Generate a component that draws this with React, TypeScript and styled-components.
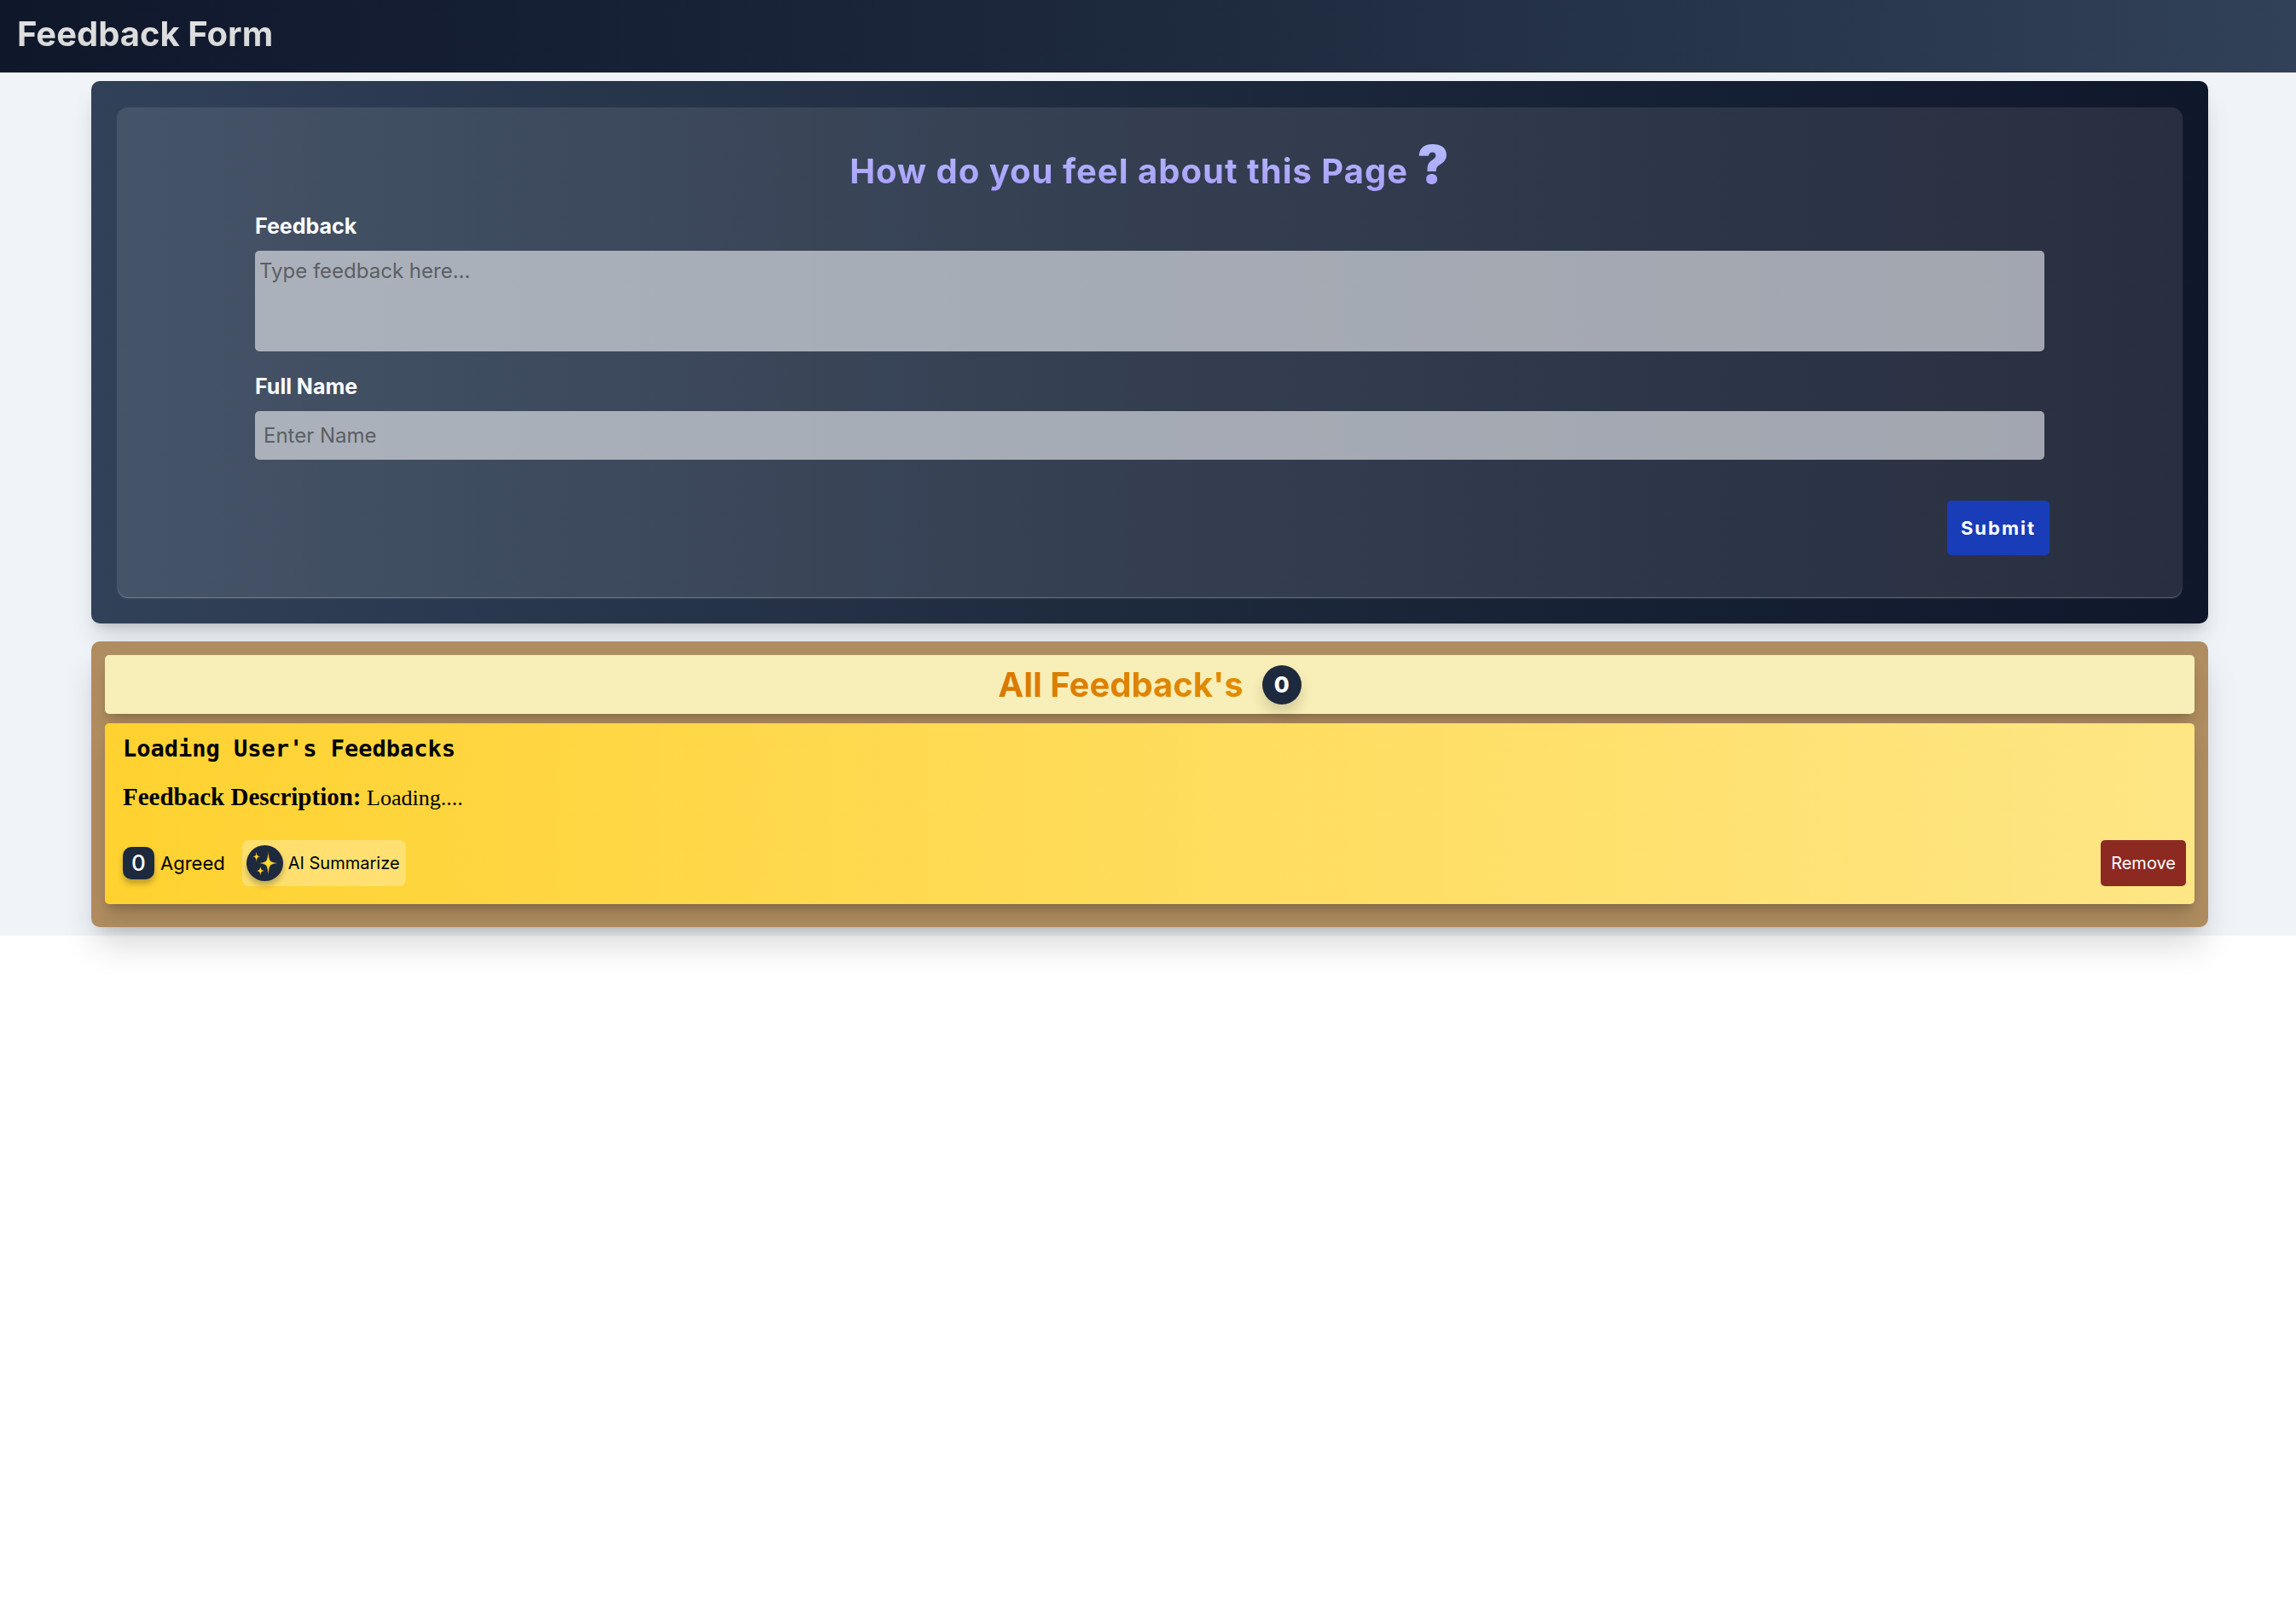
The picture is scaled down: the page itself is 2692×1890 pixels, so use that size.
import React, { useState } from "react";
import styled, { createGlobalStyle } from "styled-components";

const GlobalStyle = createGlobalStyle`
  *, *::before, *::after { box-sizing: border-box; }
  body {
    margin: 0;
    min-height: 100vh;
    background: #fff;
    color: #000;
    font-family: Inter, "Liberation Sans", sans-serif;
    font-size: 24px;
    line-height: 36px;
  }
  h1, h2, h3, p { margin: 0; }
  button, input, textarea { font-family: inherit; border: 0; }
  button { cursor: pointer; }
`;

const Page = styled.div`
  background: #f0f4f9;
`;

const TopBar = styled.header`
  display: flex;
  align-items: flex-start;
  height: 85px;
  padding: 10px 20px;
  background: linear-gradient(to right, #0f172b, #1d293d, #314158);
`;

const Brand = styled.h1`
  font-size: 40px;
  line-height: 60px;
  font-weight: 700;
  background: linear-gradient(to bottom, #e5e5e5, #d4d4d4);
  background-clip: text;
  color: transparent;
`;

const Main = styled.main`
  display: flex;
  flex-direction: column;
  gap: 21px;
  padding: 10px 103px 10px 107px;
`;

const FormPanel = styled.section`
  padding: 31px;
  border-radius: 10px;
  background: linear-gradient(to right, #314158, #1d293d, #0f172b);
  box-shadow: 0 20px 30px -5px rgba(0, 0, 0, 0.14), 0 8px 12px -6px rgba(0, 0, 0, 0.14);
`;

const FormCard = styled.form`
  display: flex;
  flex-direction: column;
  padding: 27px 161px 49px;
  border-radius: 12px;
  background: rgba(255, 255, 255, 0.1);
  box-shadow: 0 1px 2px rgba(255, 255, 255, 0.4);
`;

const Question = styled.h2`
  align-self: center;
  margin-bottom: 4px;
  font-size: 40px;
  line-height: 80px;
  font-weight: 700;
  letter-spacing: 1px;
  background: linear-gradient(to bottom, #b8c4ff, #a694ff);
  background-clip: text;
  color: transparent;
`;

const QuestionMark = styled.span`
  font-size: 62px;
  font-weight: 900;
`;

const FieldLabel = styled.label`
  margin-bottom: 9px;
  font-size: 25px;
  line-height: 40px;
  font-weight: 700;
  color: #fff;
`;

const fieldLook = `
  width: 100%;
  border-radius: 5px;
  background: rgba(225, 228, 232, 0.66);
  color: #1f2937;
  font-size: 24px;
  line-height: 36px;
  outline: 0;
  &::placeholder { color: #5b5f64; opacity: 1; }
`;

const MessageBox = styled.textarea`
  ${fieldLook}
  display: block;
  height: 118px;
  margin-bottom: 21px;
  padding: 6px 5px;
  resize: none;
`;

const NameBox = styled.input`
  ${fieldLook}
  height: 57px;
  padding: 10px;
`;

const SubmitButton = styled.button`
  align-self: flex-end;
  height: 64px;
  margin: 48px -6px 0 0;
  padding: 0 16px;
  border-radius: 5px;
  background: #193cb8;
  color: #fff;
  font-size: 22px;
  line-height: 32px;
  font-weight: 700;
  letter-spacing: 2px;
`;

const ListPanel = styled.section`
  display: flex;
  flex-direction: column;
  gap: 11px;
  padding: 16px 16px 27px;
  border-radius: 10px;
  background: #b08d60;
  box-shadow: 0 25px 40px -6px rgba(0, 0, 0, 0.16), 0 8px 16px -8px rgba(0, 0, 0, 0.14);
`;

const ListHeader = styled.div`
  display: flex;
  align-items: center;
  justify-content: center;
  gap: 22px;
  height: 69px;
  border-radius: 5px;
  background: #f8eeb7;
  box-shadow: 0 15px 22px -4px rgba(0, 0, 0, 0.14), 0 6px 8px -4px rgba(0, 0, 0, 0.14);
`;

const ListTitle = styled.h2`
  font-size: 40px;
  line-height: 60px;
  font-weight: 700;
  background: linear-gradient(to right, #da7900, #e28c00);
  background-clip: text;
  color: transparent;
`;

const TotalBadge = styled.span`
  display: flex;
  align-items: center;
  justify-content: center;
  width: 46px;
  height: 46px;
  border-radius: 50%;
  background: #1d293d;
  color: #fff;
  font-size: 26px;
  font-weight: 800;
  box-shadow: 0 10px 16px rgba(0, 0, 0, 0.14);
`;

const Entry = styled.article`
  padding: 10px 10px 21px 21px;
  border-radius: 5px;
  background: linear-gradient(to right, #ffd230, #fee685);
  box-shadow: 0 18px 24px -4px rgba(0, 0, 0, 0.14), 0 8px 10px -4px rgba(0, 0, 0, 0.14);
`;

const EntryTitle = styled.h3`
  font-family: "DejaVu Sans Mono", monospace;
  font-size: 27px;
  line-height: 40px;
  font-weight: 700;
`;

const EntryText = styled.p`
  height: 36px;
  margin: 18px 0 33px;
  font-family: "Liberation Serif", serif;
  font-size: 26px;
  line-height: 36px;
`;

const EntryTerm = styled.b`
  font-size: 29px;
`;

const EntryActions = styled.div`
  display: flex;
  align-items: center;
  gap: 20px;
`;

const AgreeButton = styled.button`
  display: flex;
  align-items: center;
  gap: 7px;
  padding: 0;
  background: none;
  color: #000;
  font-size: 22px;
  line-height: 32px;
`;

const AgreeCount = styled.span`
  display: flex;
  align-items: center;
  justify-content: center;
  width: 37px;
  height: 38px;
  border-radius: 10px;
  background: #1d293d;
  color: #fff;
  font-size: 26px;
  font-weight: 500;
  box-shadow: 0 5px 7px rgba(0, 0, 0, 0.25);
`;

const SummarizeButton = styled.button`
  display: flex;
  align-items: center;
  gap: 6px;
  height: 54px;
  padding: 0 7px 0 5px;
  border-radius: 8px;
  background: rgba(255, 255, 255, 0.28);
  color: #000;
  font-size: 20px;
  line-height: 32px;
`;

const SparkleDisc = styled.span`
  display: flex;
  align-items: center;
  justify-content: center;
  width: 43px;
  height: 42px;
  border-radius: 50%;
  background: #1d293d;
  box-shadow: 0 5px 7px rgba(0, 0, 0, 0.25);
`;

const RemoveButton = styled.button`
  height: 54px;
  margin-left: auto;
  padding: 0 12px;
  border-radius: 5px;
  background: #8c2a22;
  color: #fff;
  font-size: 20px;
  line-height: 32px;
`;

function Sparkles() {
  return (
    <svg width="30" height="30" viewBox="0 0 30 30" aria-hidden="true">
      <defs>
        <radialGradient id="spark">
          <stop offset="0" stopColor="#ffe43a" />
          <stop offset="0.4" stopColor="#ffcb33" />
          <stop offset="1" stopColor="#e9952c" />
        </radialGradient>
      </defs>
      <g fill="url(#spark)">
        <path d="M19.500 1 Q20 9.500 22 12.500 Q24 14.300 30 15 Q24 15.700 22 17.500 Q20 20.500 19.500 29 Q19 20.500 17 17.500 Q15 15.700 9 15 Q15 14.300 17 12.500 Q19 9.500 19.500 1Z" />
        <path d="M5.700 1.500 Q6 5.500 7 6.200 Q8 7 10.500 7.300 Q8 7.700 7 8.500 Q6 9.500 5.700 13.500 Q5.400 9.500 4.400 8.500 Q3.400 7.700 1 7.300 Q3.400 7 4.400 6.200 Q5.400 5.500 5.700 1.500Z" />
        <path d="M10.300 18.300 Q10.600 22 11.600 22.800 Q12.600 23.600 15 24 Q12.600 24.400 11.600 25.200 Q10.600 26 10.300 29.700 Q10 26 9 25.200 Q8 24.400 5.600 24 Q8 23.600 9 22.800 Q10 22 10.300 18.300Z" />
      </g>
    </svg>
  );
}

export default function App() {
  const [message, setMessage] = useState("");
  const [name, setName] = useState("");

  return (
    <>
      <GlobalStyle />
      <Page>
        <TopBar>
          <Brand>Feedback Form</Brand>
        </TopBar>
        <Main>
          <FormPanel>
            <FormCard onSubmit={(e: React.FormEvent) => e.preventDefault()}>
              <Question>
                How do you feel about this Page <QuestionMark>?</QuestionMark>
              </Question>
              <FieldLabel htmlFor="feedback">Feedback</FieldLabel>
              <MessageBox
                id="feedback"
                placeholder="Type feedback here..."
                value={message}
                onChange={(e) => setMessage(e.target.value)}
              />
              <FieldLabel htmlFor="full-name">Full Name</FieldLabel>
              <NameBox
                id="full-name"
                type="text"
                placeholder="Enter Name"
                value={name}
                onChange={(e) => setName(e.target.value)}
              />
              <SubmitButton type="submit">Submit</SubmitButton>
            </FormCard>
          </FormPanel>
          <ListPanel>
            <ListHeader>
              <ListTitle>All Feedback's</ListTitle>
              <TotalBadge>0</TotalBadge>
            </ListHeader>
            <Entry>
              <EntryTitle>Loading User's Feedbacks</EntryTitle>
              <EntryText>
                <EntryTerm>Feedback Description:</EntryTerm> Loading....
              </EntryText>
              <EntryActions>
                <AgreeButton type="button">
                  <AgreeCount>0</AgreeCount>
                  Agreed
                </AgreeButton>
                <SummarizeButton type="button">
                  <SparkleDisc>
                    <Sparkles />
                  </SparkleDisc>
                  AI Summarize
                </SummarizeButton>
                <RemoveButton type="button">Remove</RemoveButton>
              </EntryActions>
            </Entry>
          </ListPanel>
        </Main>
      </Page>
    </>
  );
}
